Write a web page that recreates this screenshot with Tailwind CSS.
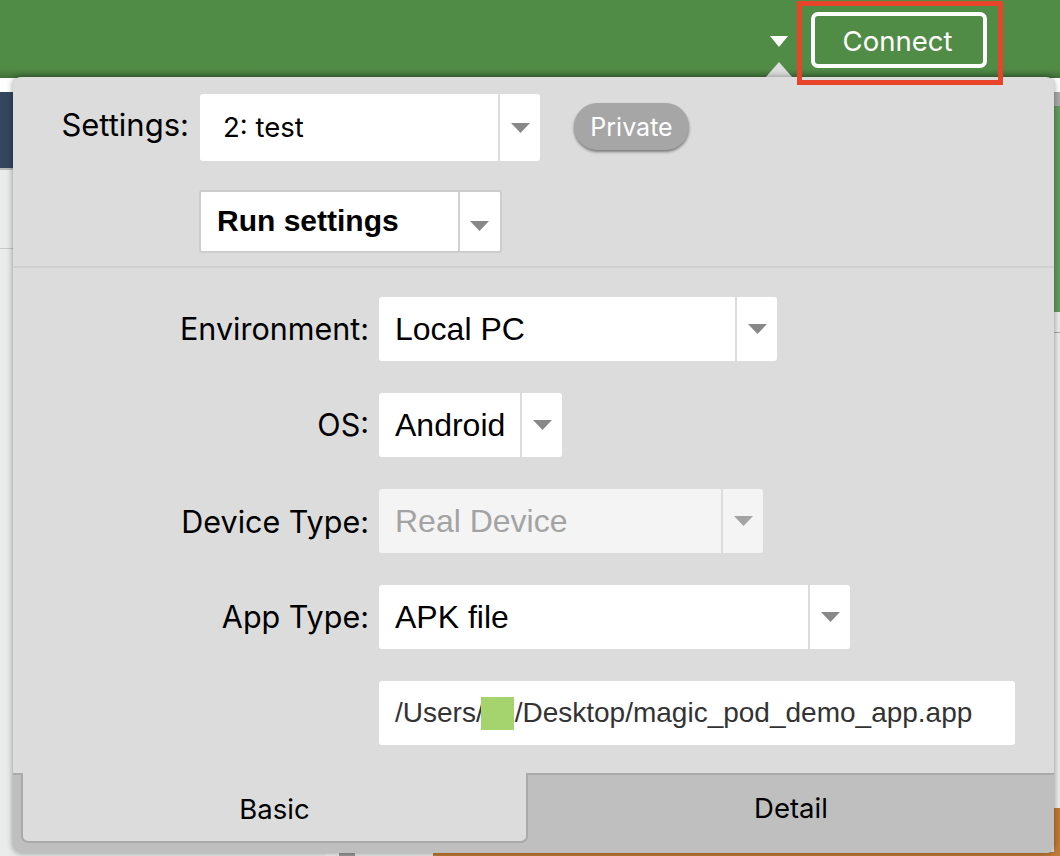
<!DOCTYPE html>
<html lang="en">
<head>
  <meta charset="UTF-8" />
  <title>Connect settings</title>
  <script src="https://cdn.jsdelivr.net/npm/@tailwindcss/browser@4"></script>
</head>
<body class="relative w-[1060px] h-[856px] overflow-hidden bg-[#e9eceb] font-['Liberation_Sans',sans-serif] text-black">

  <!-- Header -->
  <header class="relative h-[78px] bg-gradient-to-b from-[#518c47] from-[88%] to-[#3f6f38] flex items-start">
    <svg class="absolute left-[770px] top-[36px]" width="18" height="11" viewBox="0 0 18 11"><path d="M0 0H18L9 11Z" fill="#fff"/></svg>
    <button class="absolute left-[811px] top-[12px] w-[176px] h-[56px] border-[4px] border-white rounded-[7px] text-white text-[27.5px] font-['Inter',sans-serif] pt-[4px] pr-[3px]">Connect</button>
  </header>

  <!-- Page behind the panel -->
  <div class="absolute left-0 top-[78px] w-full h-[14px] bg-white"></div>
  <div class="absolute left-0 top-[92px] w-[13px] h-[78px] bg-[#34465e] border-b-2 border-[#b9bcbc]"></div>
  <div class="absolute left-0 top-[248px] w-[13px] h-px bg-[#c4c8c8]"></div>
  <div class="absolute right-0 top-[92px] w-[6px] h-[14px] bg-[#a9a9a9]"></div>
  <div class="absolute right-0 top-[106px] w-[6px] h-[206px] bg-[#669a5e]"></div>
  <div class="absolute right-0 top-[332px] w-[6px] h-px bg-[#a9a9a9]"></div>
  <div class="absolute right-0 top-[808px] w-[6px] h-[48px] bg-[#c07a35]"></div>
  <div class="absolute left-[325px] top-[852px] w-[14px] h-[4px] bg-[#f2f2f2]"></div>
  <div class="absolute left-[339px] top-[852px] w-[16px] h-[4px] bg-[#9a9a9a]"></div>
  <div class="absolute left-[433px] top-[852px] right-0 h-[4px] bg-[#c07a35]"></div>

  <!-- Notch -->
  <svg class="absolute left-[765px] top-[62px]" width="28" height="16" viewBox="0 0 28 16"><path d="M0 16L14 0L28 16Z" fill="#dcdcdc"/></svg>

  <!-- Panel -->
  <section class="absolute left-[13px] top-[77px] w-[1041px] h-[776px] bg-[#dcdcdc] rounded-[8px] shadow-[0_0_6px_rgba(0,0,0,0.4)] overflow-hidden flex flex-col">
    <div class="h-[191px] border-b-2 border-[#d0d0d0] pt-[17px]">
      <div class="flex items-center h-[67px]">
        <label class="w-[176px] text-right text-[31px] font-['Inter',sans-serif] pb-[5px]">Settings:</label>
        <div class="ml-[11px] w-[340px] h-[67px] bg-white rounded-[3px] flex">
          <span class="flex-1 flex items-center pl-[23px] text-[27.5px] font-['Inter',sans-serif]">2: test</span>
          <span class="w-[42px] border-l-2 border-[#dcdcdc] flex items-center justify-center"><svg width="19" height="10" viewBox="0 0 19 10"><path d="M0 0H19L9.5 10Z" fill="#888"/></svg></span>
        </div>
        <span class="ml-[34px] mb-[2px] pt-[2px] w-[115px] h-[47px] rounded-full bg-[#a6a6a6] text-white text-[25px] flex items-center justify-center shadow-[0_2px_3px_rgba(0,0,0,0.45)] font-['Inter',sans-serif]">Private</span>
      </div>
      <div class="ml-[186px] mt-[29px] w-[303px] h-[63px] bg-white border-2 border-[#cdcdcd] rounded-[3px] flex">
        <span class="flex-1 flex items-center pl-[16px] pb-[2px] text-[30px] font-bold">Run settings</span>
        <span class="w-[42px] border-l-2 border-[#d0d0d0] flex items-center justify-center pt-[8px] pr-[2px]"><svg width="19" height="10" viewBox="0 0 19 10"><path d="M0 0H19L9.5 10Z" fill="#888"/></svg></span>
      </div>
    </div>

    <div class="flex-1 pt-[29px] flex flex-col gap-[32px]">
      <div class="flex items-center h-[64px]">
        <label class="w-[356px] text-right text-[30.5px] font-['Inter',sans-serif]">Environment:</label>
        <div class="ml-[10px] w-[398px] h-[64px] bg-white rounded-[3px] flex">
          <span class="flex-1 flex items-center pl-[16px] text-[32px]">Local PC</span>
          <span class="w-[42px] border-l-2 border-[#dcdcdc] flex items-center justify-center"><svg width="19" height="10" viewBox="0 0 19 10"><path d="M0 0H19L9.5 10Z" fill="#888"/></svg></span>
        </div>
      </div>
      <div class="flex items-center h-[64px]">
        <label class="w-[356px] text-right text-[30.5px] font-['Inter',sans-serif]">OS:</label>
        <div class="ml-[10px] w-[183px] h-[64px] bg-white rounded-[3px] flex">
          <span class="flex-1 flex items-center pl-[16px] text-[32px]">Android</span>
          <span class="w-[42px] border-l-2 border-[#dcdcdc] flex items-center justify-center"><svg width="19" height="10" viewBox="0 0 19 10"><path d="M0 0H19L9.5 10Z" fill="#888"/></svg></span>
        </div>
      </div>
      <div class="flex items-center h-[64px]">
        <label class="w-[356px] text-right text-[30.5px] font-['Inter',sans-serif] pt-[2px]">Device Type:</label>
        <div class="ml-[10px] w-[384px] h-[64px] bg-[#f4f4f4] rounded-[3px] flex">
          <span class="flex-1 flex items-center pl-[16px] text-[32px] text-[#a3a3a3]">Real Device</span>
          <span class="w-[42px] border-l-2 border-[#dcdcdc] flex items-center justify-center"><svg width="19" height="10" viewBox="0 0 19 10"><path d="M0 0H19L9.5 10Z" fill="#a3a3a3"/></svg></span>
        </div>
      </div>
      <div class="flex items-center h-[64px]">
        <label class="w-[356px] text-right text-[30.5px] font-['Inter',sans-serif]">App Type:</label>
        <div class="ml-[10px] w-[471px] h-[64px] bg-white rounded-[3px] flex">
          <span class="flex-1 flex items-center pl-[16px] text-[32px]">APK file</span>
          <span class="w-[42px] border-l-2 border-[#dcdcdc] flex items-center justify-center"><svg width="19" height="10" viewBox="0 0 19 10"><path d="M0 0H19L9.5 10Z" fill="#888"/></svg></span>
        </div>
      </div>
      <div class="ml-[366px] w-[636px] h-[64px] bg-white rounded-[3px] flex items-center pl-[16px] text-[28px] text-[#333]">
        <span>/Users/</span><span class="-ml-[3px] mr-px w-[33px] h-[33px] bg-[#a5d46f]"></span><span>/Desktop/magic_pod_demo_app.app</span>
      </div>
    </div>

    <!-- Tabs -->
    <div class="h-[80px] flex bg-[#bfbfbf] pl-[8px] border-t-2 border-[#aaa]">
      <div class="w-[507px] h-[70px] bg-[#dcdcdc] border-x-2 border-b-2 border-[#aaa] rounded-b-[7px] flex items-center justify-center text-[27.5px] font-['Inter',sans-serif] pt-[5px] -mt-[2px]">Basic</div>
      <div class="flex-1 h-full flex items-center justify-center text-[27.5px] font-['Inter',sans-serif] pb-[10px]">Detail</div>
    </div>
  </section>

  <!-- Red highlight -->
  <div class="absolute left-[797px] top-[1px] w-[206px] h-[84px] border-[5px] border-[#e8442a]"></div>
</body>
</html>
